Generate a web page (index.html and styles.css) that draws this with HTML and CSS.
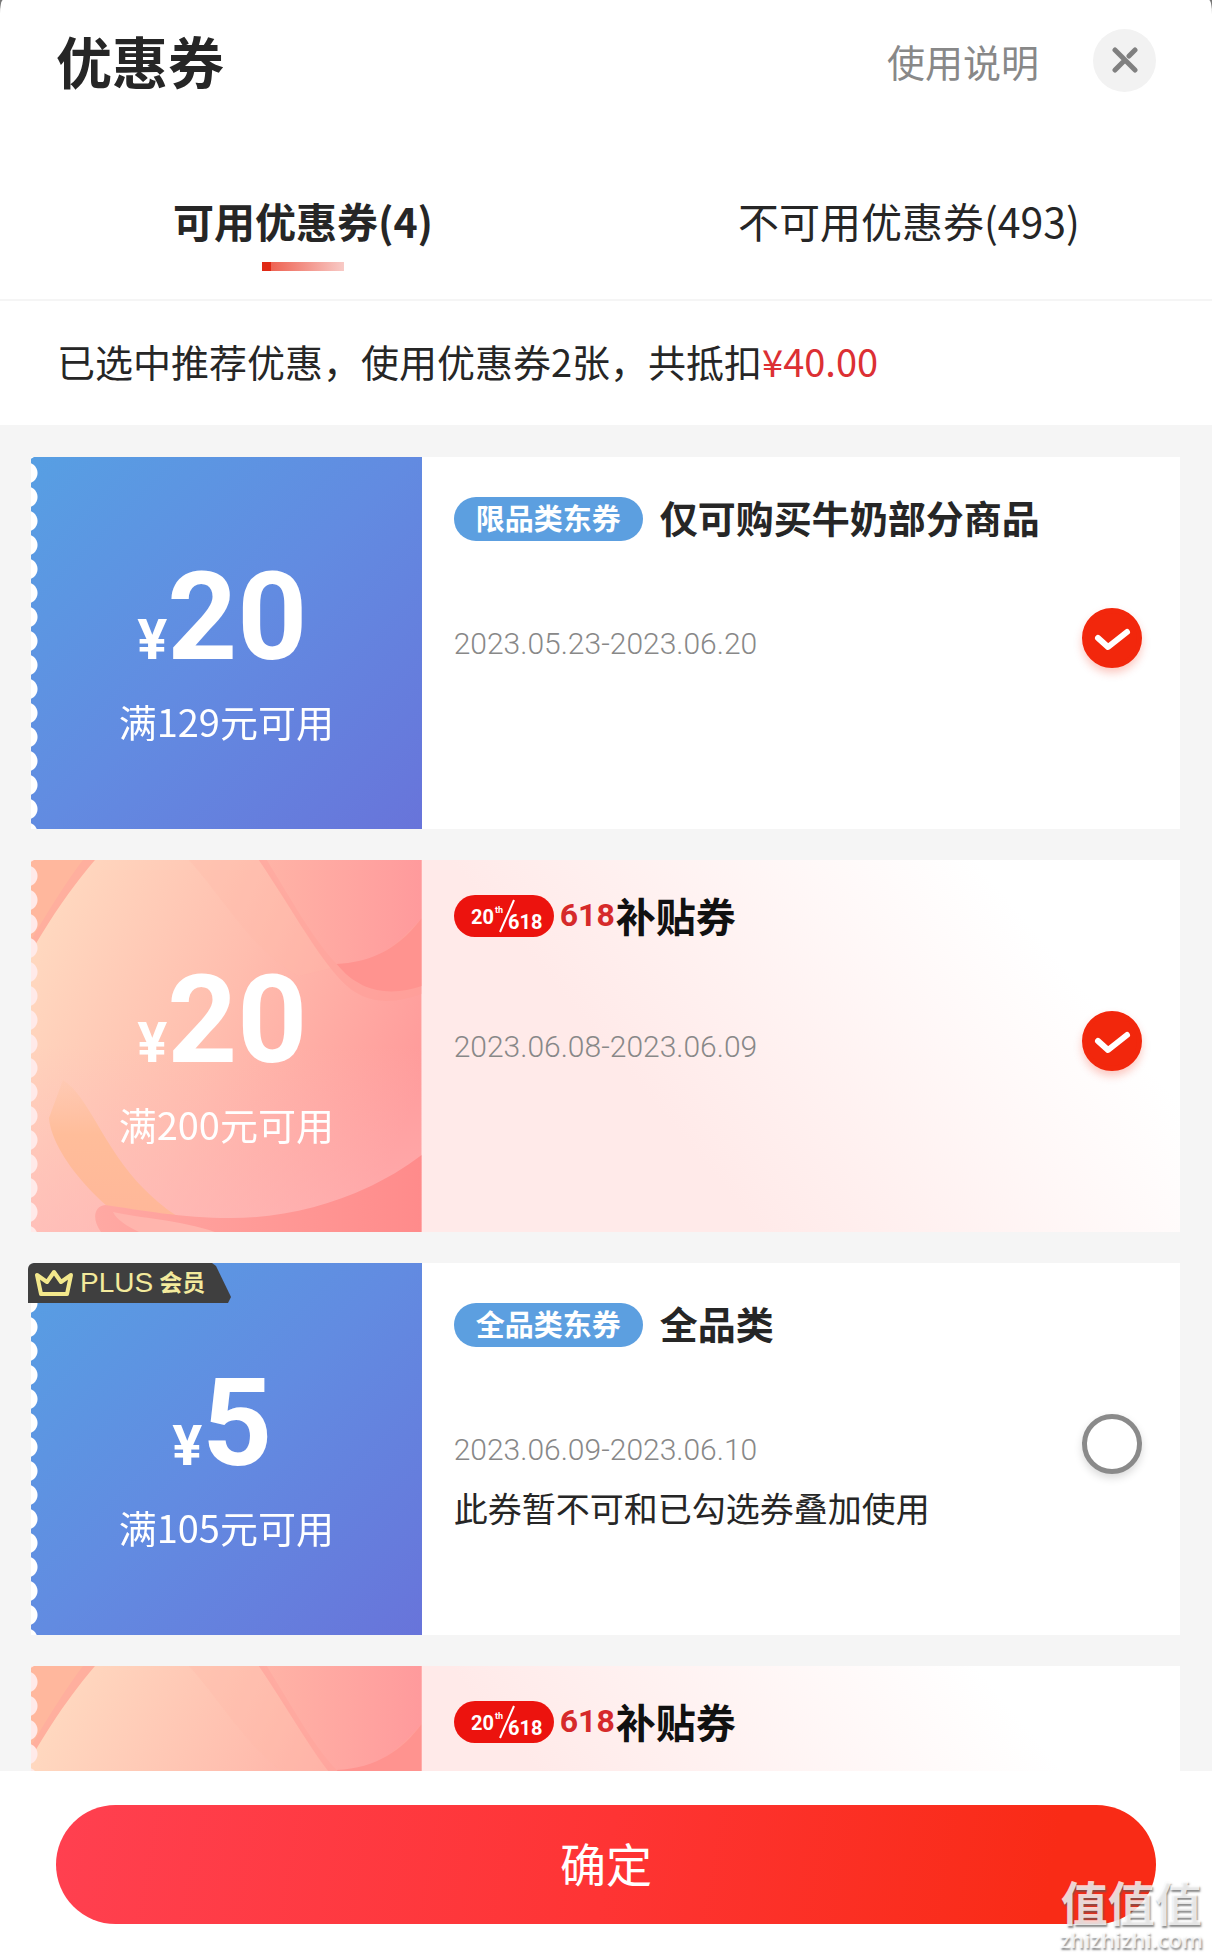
FILE: index.html
```html
<!DOCTYPE html>
<html lang="zh-CN">
<head>
    <meta charset="UTF-8">
    <meta name="viewport" content="width=device-width, initial-scale=1.0">
    <title>优惠券</title>
    <link rel="stylesheet" href="styles.css">
</head>
<body>
    <!-- shared drawings -->
    <svg class="defs" width="0" height="0" aria-hidden="true">
        <defs>
            <linearGradient id="petalBase" x1="0" y1="0.2" x2="1" y2="0.6">
                <stop offset="0" stop-color="#ffd9c0"/>
                <stop offset="0.5" stop-color="#ffbdae"/>
                <stop offset="1" stop-color="#ff9a9a"/>
            </linearGradient>
            <linearGradient id="petalRight" x1="0" y1="0" x2="1" y2="0">
                <stop offset="0" stop-color="#ffb3a6"/>
                <stop offset="1" stop-color="#ff9a9c"/>
            </linearGradient>
            <linearGradient id="petalLow" x1="0" y1="0" x2="1" y2="0">
                <stop offset="0" stop-color="#ffa9a3"/>
                <stop offset="1" stop-color="#ff8b8b"/>
            </linearGradient>
            <linearGradient id="petalGlow" x1="0" y1="0" x2="0" y2="1">
                <stop offset="0.5" stop-color="#ffb9bb" stop-opacity="0"/>
                <stop offset="1" stop-color="#ffb9bb" stop-opacity="0.6"/>
            </linearGradient>
            <linearGradient id="leaf" x1="0" y1="0" x2="0" y2="1">
                <stop offset="0" stop-color="#ffc49f" stop-opacity="0.2"/>
                <stop offset="0.4" stop-color="#ffbd9a"/>
                <stop offset="1" stop-color="#ffb799"/>
            </linearGradient>
        </defs>
        <symbol id="petals" viewBox="0 0 391 372" preserveAspectRatio="none">
            <rect width="391" height="372" fill="url(#petalBase)"/>
            <rect width="391" height="372" fill="url(#petalGlow)"/>
            <path d="M0 0H64C42 26 22 54 0 92Z" fill="#ffaf9e"/>
            <path d="M0 0H52C34 24 18 50 0 80Z" fill="#ffb79d"/>
            <path d="M158 0C190 34 220 90 268 116L300 108C276 76 256 36 232 0Z" fill="#ffb9a8" fill-opacity="0.3"/>
            <path d="M228 0C262 50 284 92 310 120C334 146 362 144 391 134V0Z" fill="#ff9f98" fill-opacity="0.6"/>
            <path d="M236 0C262 42 284 82 306 104C340 108 368 84 391 58V0Z" fill="url(#petalRight)"/>
            <path d="M391 58C372 84 346 102 306 104C330 134 362 136 391 126Z" fill="#ff938f"/>
            <path d="M32 220C64 240 76 310 146 356L76 346C46 320 20 284 18 258Z" fill="url(#leaf)"/>
            <path d="M74 345C110 350 150 358 200 358C270 358 340 334 391 295V372H70C60 358 64 346 74 345Z" fill="url(#petalLow)"/>
            <path d="M82 352C108 358 150 360 184 372H108C96 366 86 360 82 352Z" fill="#ffb5ad"/>
        </symbol>
        <symbol id="tick" viewBox="0 0 60 60">
            <path d="M16 30L26 39L45 24" fill="none" stroke="#fff" stroke-width="6" stroke-linecap="round" stroke-linejoin="round"/>
        </symbol>
    </svg>

    <main class="sheet">
        <header class="sheet-header">
            <h1>优惠券</h1>
            <a class="help" href="#help">使用说明</a>
            <button class="close" type="button" aria-label="关闭">
                <svg width="26" height="26" viewBox="0 0 26 26"><path d="M3 3L23 23M23 3L17 9M13 13L3 23" stroke="#808080" stroke-width="5" stroke-linecap="round"/></svg>
            </button>
        </header>

        <nav class="tabs">
            <button class="tab active" type="button">可用优惠券(4)</button>
            <button class="tab" type="button">不可用优惠券(493)</button>
        </nav>

        <p class="notice">已选中推荐优惠，使用优惠券2张，共抵扣<span class="money">¥40.00</span></p>

        <section class="coupons">
            <article class="coupon">
                <div class="value blue">
                    <div class="price"><span class="yen">¥</span>20</div>
                    <div class="limit">满129元可用</div>
                </div>
                <div class="info">
                    <div class="head"><span class="tag">限品类东券</span><h2>仅可购买牛奶部分商品</h2></div>
                    <p class="date">2023.05.23-2023.06.20</p>
                </div>
                <label class="pick">
                    <input type="checkbox" checked aria-label="仅可购买牛奶部分商品">
                    <svg><use href="#tick"/></svg>
                </label>
            </article>

            <article class="coupon promo">
                <div class="value">
                    <svg class="art"><use href="#petals"/></svg>
                    <div class="price"><span class="yen">¥</span>20</div>
                    <div class="limit">满200元可用</div>
                </div>
                <div class="info">
                    <div class="head">
                        <svg class="logo" viewBox="0 0 100 42">
                            <rect width="100" height="42" rx="21" fill="#ec130e"/>
                            <text x="17" y="29" font-size="20">20</text>
                            <text x="41" y="18" font-size="9">th</text>
                            <text x="54" y="34" font-size="20">618</text>
                            <path d="M60 5L46 37" stroke="#fff" stroke-width="2"/>
                        </svg>
                        <h2><span class="num">618</span>补贴券</h2>
                    </div>
                    <p class="date">2023.06.08-2023.06.09</p>
                </div>
                <label class="pick">
                    <input type="checkbox" checked aria-label="618补贴券">
                    <svg><use href="#tick"/></svg>
                </label>
            </article>

            <article class="coupon">
                <div class="value blue">
                    <div class="price"><span class="yen">¥</span>5</div>
                    <div class="limit">满105元可用</div>
                </div>
                <div class="plus">
                    <svg class="crown" width="40" height="28" viewBox="0 0 40 28"><path d="M3 6L7 25H33L37 6L27 13L20 3L13 13Z" fill="none" stroke="#f3e88c" stroke-width="4" stroke-linejoin="round"/></svg>
                    <span>PLUS</span><b>会员</b>
                </div>
                <div class="info">
                    <div class="head"><span class="tag">全品类东券</span><h2>全品类</h2></div>
                    <p class="date">2023.06.09-2023.06.10</p>
                    <p class="note">此券暂不可和已勾选券叠加使用</p>
                </div>
                <label class="pick">
                    <input type="checkbox" aria-label="全品类">
                    <svg><use href="#tick"/></svg>
                </label>
            </article>

            <article class="coupon promo">
                <div class="value">
                    <svg class="art"><use href="#petals"/></svg>
                </div>
                <div class="info">
                    <div class="head">
                        <svg class="logo" viewBox="0 0 100 42">
                            <rect width="100" height="42" rx="21" fill="#ec130e"/>
                            <text x="17" y="29" font-size="20">20</text>
                            <text x="41" y="18" font-size="9">th</text>
                            <text x="54" y="34" font-size="20">618</text>
                            <path d="M60 5L46 37" stroke="#fff" stroke-width="2"/>
                        </svg>
                        <h2><span class="num">618</span>补贴券</h2>
                    </div>
                </div>
            </article>
        </section>

        <footer class="bottom">
            <button class="confirm" type="button">确定</button>
        </footer>

        <div class="watermark"><strong>值值值</strong><span>zhizhizhi.com</span></div>
    </main>
</body>
</html>
```
FILE: styles.css
```css
* {
    box-sizing: border-box;
}
body {
    margin: 0;
    background-color: #777;
    color: #262626;
    font-family: "Noto Sans CJK SC", sans-serif;
}
h1, h2, p {
    margin: 0;
}
button {
    border: 0;
    padding: 0;
    font-family: inherit;
    color: inherit;
    cursor: pointer;
}
.defs {
    position: absolute;
}
.sheet {
    position: relative;
    display: flex;
    flex-direction: column;
    height: 100vh;
    overflow: hidden;
    background-color: #fff;
    border-radius: 3px 3px 0 0 / 14px 14px 0 0;
}

/* header */
.sheet-header {
    display: flex;
    align-items: center;
    flex-shrink: 0;
    height: 120px;
    padding: 0 56px;
}
.sheet-header h1 {
    flex: 1;
    font-size: 56px;
    line-height: 80px;
}
.help {
    margin-right: 54px;
    font-size: 38px;
    color: #888;
    text-decoration: none;
}
.close {
    display: flex;
    align-items: center;
    justify-content: center;
    width: 63px;
    height: 63px;
    border-radius: 50%;
    background-color: #f2f2f2;
}

/* tabs */
.tabs {
    display: flex;
    flex-shrink: 0;
    border-bottom: 2px solid #f5f5f5;
}
.tab {
    flex: 1;
    padding: 70px 0 28px;
    background: none;
    font-size: 41px;
    line-height: 60px;
}
.tab::after {
    content: "";
    display: block;
    width: 82px;
    height: 9px;
    margin: 12px auto 0;
}
.tab.active {
    font-weight: bold;
}
.tab.active::after {
    background: linear-gradient(90deg, #e02a16 9px, #ee6353 9px, #f8cac6);
}
.notice {
    flex-shrink: 0;
    padding: 30px 57px 34px;
    font-size: 38px;
    line-height: 60px;
}
.money {
    color: #dc3034;
}

/* coupon list */
.coupons {
    display: flex;
    flex-direction: column;
    flex: 1;
    gap: 31px;
    min-height: 0;
    padding: 32px 32px 32px 31px;
    overflow-y: auto;
    scrollbar-width: none;
    background-color: #f5f5f5;
}
.coupon {
    position: relative;
    display: flex;
    flex-shrink: 0;
    min-height: 372px;
    background-color: #fff;
}
.promo {
    background: linear-gradient(50deg, #ffeae9 50%, #fff 86%);
}
.value {
    position: relative;
    width: 34%;
    padding-top: 115px;
    color: #fff;
    text-align: center;
    -webkit-mask: radial-gradient(circle at -4px 12px, transparent 10px, #000 11px) 0 4px / 100% 24px;
    mask: radial-gradient(circle at -4px 12px, transparent 10px, #000 11px) 0 4px / 100% 24px;
}
.blue {
    background: linear-gradient(135deg, #579fe3, #628be1 50%, #6874da);
}
.art {
    position: absolute;
    top: 0;
    left: 0;
    width: 100%;
    height: 100%;
}
.price {
    position: relative;
    padding-right: 8px;
    font-family: Roboto, sans-serif;
    font-size: 122px;
    font-weight: bold;
    line-height: 92px;
}
.yen {
    font-size: 56px;
}
.limit {
    position: relative;
    margin-top: 15px;
    font-size: 38px;
    line-height: 40px;
}
.info {
    flex: 1;
    padding-left: 32px;
}
.head {
    display: flex;
    align-items: flex-start;
    gap: 17px;
    height: 167px;
    padding-top: 40px;
}
.promo .head {
    gap: 6px;
    padding-top: 35px;
}
.head h2 {
    font-size: 38px;
    line-height: 40px;
}
.promo h2 {
    display: flex;
    gap: 1px;
    font-size: 40px;
    color: #111;
}
.num {
    font-family: Roboto, sans-serif;
    font-size: 32px;
    color: #d62a2a;
}
.logo {
    width: 100px;
    height: 42px;
    fill: #fff;
    font-family: Roboto, sans-serif;
    font-weight: bold;
}
.tag {
    height: 44px;
    padding: 0 22px;
    border-radius: 22px;
    background-color: #5c9fe0;
    color: #fff;
    font-size: 29px;
    font-weight: bold;
    line-height: 40px;
}
.date {
    font-family: Roboto, sans-serif;
    font-size: 30px;
    font-weight: 300;
    line-height: 40px;
    color: #888;
}
.note {
    margin-top: 18px;
    font-size: 34px;
    line-height: 40px;
}

/* round check boxes */
.pick {
    display: grid;
    align-self: flex-start;
    margin: 151px 38px 0 0;
}
.pick input, .pick svg {
    grid-area: 1 / 1;
    width: 60px;
    height: 60px;
    margin: 0;
}
.pick input {
    appearance: none;
    border: 5px solid #8a8a8a;
    border-radius: 50%;
    background-color: #fff;
    box-shadow: 0 4px 8px rgba(0, 0, 0, 0.15);
}
.pick input:checked {
    border-color: #f2270c;
    background-color: #f2270c;
    box-shadow: 0 5px 8px rgba(242, 39, 12, 0.25);
}
.pick svg {
    pointer-events: none;
}
.pick input:not(:checked) + svg {
    visibility: hidden;
}

/* member ribbon over the card corner */
.plus {
    position: absolute;
    top: 0;
    left: -3px;
    display: flex;
    align-items: center;
    width: 203px;
    height: 40px;
    padding-left: 6px;
    border-radius: 6px 0 0 0;
    background-color: #3f3f3f;
    clip-path: polygon(0 0, 184px 0, 188px 3px, 203px 34px, 200px 40px, 0 40px);
    color: #f3ea9c;
    font-family: "Liberation Sans", "Noto Sans CJK SC", sans-serif;
    font-size: 28px;
    line-height: 40px;
}
.plus span {
    margin: 0 6px;
}
.plus b {
    font-size: 23px;
}

/* footer */
.bottom {
    flex-shrink: 0;
    padding: 34px 56px 35px;
}
.confirm {
    display: block;
    width: 100%;
    height: 119px;
    padding-bottom: 6px;
    border-radius: 60px;
    background: linear-gradient(100deg, #ff4050, #fe3434 50%, #f92b16 90%);
    color: #fff;
    font-size: 46px;
}
.watermark {
    position: absolute;
    right: 9px;
    bottom: 6px;
    color: rgba(255, 255, 255, 0.8);
    text-align: center;
    text-shadow: 1px 2px 2px rgba(90, 90, 90, 0.7);
    pointer-events: none;
}
.watermark strong, .watermark span {
    display: block;
}
.watermark strong {
    font-size: 47px;
    line-height: 48px;
}
.watermark span {
    font-family: "Open Sans", sans-serif;
    font-size: 22px;
    font-weight: 600;
    line-height: 28px;
}
```
